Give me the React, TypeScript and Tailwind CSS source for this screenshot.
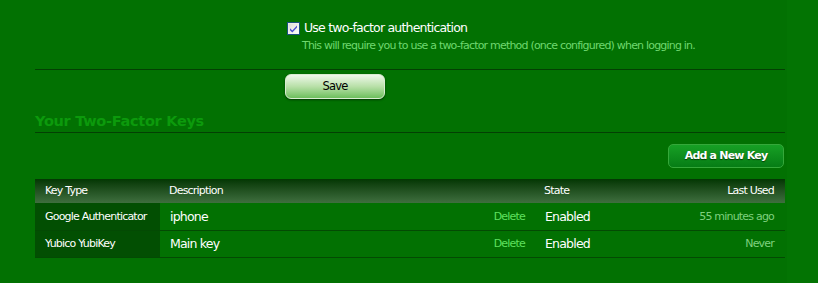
import React from "react";

const font = { fontFamily: '"DejaVu Sans", Tahoma, sans-serif' };

function Check() {
  return (
    <svg width="13" height="13" viewBox="0 0 13 13" className="shrink-0">
      <defs>
        <linearGradient id="g" x1="0" y1="0" x2="1" y2="1">
          <stop offset="0" stopColor="#dcdcd6" />
          <stop offset="1" stopColor="#ffffff" />
        </linearGradient>
      </defs>
      <rect x="0.5" y="0.5" width="12" height="12" fill="#f4f4f0" stroke="#1c5180" />
      <rect x="1.5" y="1.5" width="10" height="10" fill="url(#g)" />
      <path d="M3 6.2 L5.3 8.6 L10 3.6 L10 5.6 L5.3 10.6 L3 8.2 Z" fill="#4b4fd0" />
    </svg>
  );
}

export default function App() {
  const rows = [
    { type: "Google Authenticator", desc: "iphone", state: "Enabled", last: "55 minutes ago" },
    { type: "Yubico YubiKey", desc: "Main key", state: "Enabled", last: "Never" },
  ];
  return (
    <div className="w-[818px] h-[283px] bg-[#037403] overflow-hidden tracking-[-0.05em]" style={font}>
      <div className="w-[787px] h-full bg-[#027102] pl-[35px]">
        <div className="w-[750px] pt-[21px]">
          <div className="pl-[252px] pb-[16px]">
            <div className="flex items-center gap-[4px] h-[14px]">
              <Check />
              <span className="text-[12.5px] text-white leading-none">Use two-factor authentication</span>
            </div>
            <div className="pl-[15px] mt-[4px] text-[11px] text-[#6fd86f] leading-[14px]">
              This will require you to use a two-factor method (once configured) when logging in.
            </div>
          </div>
          <div className="border-t border-[#034003] pt-[3px] pl-[250px]">
            <button className="w-[100px] h-[25px] rounded-[6px] border border-[#d8ecd0] bg-gradient-to-b from-[#eef8ea] via-[#b8e0a8] to-[#6cbf5c] shadow-[0_1px_2px_rgba(0,0,0,0.5)] text-[11.5px] text-black">
              Save
            </button>
          </div>
          <div className="mt-[13px] border-b border-[#034003] pb-[1px]">
            <h2 className="text-[14.5px] font-bold text-[#0c9a0c] leading-[19px] tracking-[-0.02em]">Your Two-Factor Keys</h2>
          </div>
          <div className="flex justify-end mt-[11px] pr-[1px]">
            <button className="w-[116px] h-[24px] rounded-[5px] border border-[#35a83a] bg-gradient-to-b from-[#17a025] to-[#067d15] text-white font-bold text-[11px] [text-shadow:0_1px_1px_#033a03]">
              Add a New Key
            </button>
          </div>
          <table className="mt-[11px] w-full table-fixed border-collapse text-white">
            <colgroup>
              <col className="w-[125px]" />
              <col className="w-[320px]" />
              <col className="w-[55px]" />
              <col className="w-[125px]" />
              <col />
            </colgroup>
            <thead>
              <tr className="h-[24px] bg-gradient-to-b from-[#033703] to-[#3f6f3f] text-[11px]">
                <th className="text-left font-normal pl-[10px]">Key Type</th>
                <th className="text-left font-normal pl-[9px]" colSpan={2}>Description</th>
                <th className="text-left font-normal pl-[9px]">State</th>
                <th className="text-right font-normal pr-[11px]">Last Used</th>
              </tr>
            </thead>
            <tbody>
              {rows.map((r) => (
                <tr key={r.type} className="h-[27px] border-b border-[#034a03]">
                  <td className="bg-[#024f02] pl-[10px] pt-[1px] text-[11px] whitespace-nowrap">{r.type}</td>
                  <td className="pl-[10px] pt-[2px] text-[12.5px]">{r.desc}</td>
                  <td className="text-right pr-[10px] pt-[2px] text-[11px] text-[#5fe05f]">Delete</td>
                  <td className="pl-[10px] pt-[2px] text-[12.5px]">{r.state}</td>
                  <td className="text-right pr-[11px] pt-[2px] text-[11px] text-[#7fd07f]">{r.last}</td>
                </tr>
              ))}
            </tbody>
          </table>
        </div>
      </div>
    </div>
  );
}
